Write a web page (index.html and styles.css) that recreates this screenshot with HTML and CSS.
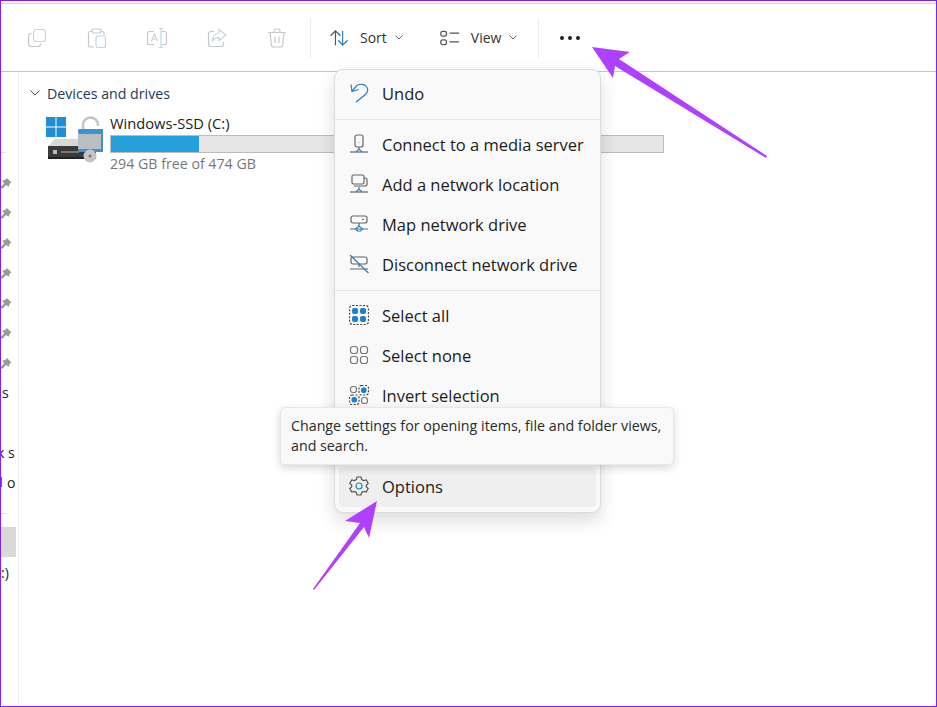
FILE: index.html
```html
<!DOCTYPE html>
<html lang="en">
<head>
<meta charset="utf-8">
<title>File Explorer</title>
<link rel="stylesheet" href="styles.css">
</head>
<body>
<div class="page">
  <div class="topstrip"></div>
  <div class="toolbar">
    <div class="tool">
      <svg class="ico" viewBox="0 0 20 20"><rect x="6.500" y="1.500" width="12" height="12" rx="3" stroke="#bfd6e6"/><path d="M5 5.500H4A2.500 2.500 0 0 0 1.500 8v7.500A3 3 0 0 0 4.500 18.500H11A2.500 2.500 0 0 0 13.500 16v-.5" stroke="#c8c8c8"/></svg>
    </div>
    <div class="tool">
      <svg class="ico" viewBox="0 0 20 20"><path d="M5 3.500H3.500a2 2 0 0 0-2 2V17a2 2 0 0 0 2 2H7M14 3.500h1a2 2 0 0 1 2 2V7" stroke="#c8c8c8"/><rect x="5" y="1" width="9" height="4" rx="1.500" stroke="#c8c8c8"/><rect x="9" y="8" width="9.500" height="11.500" rx="2" stroke="#bfd6e6"/></svg>
    </div>
    <div class="tool">
      <svg class="ico wide" viewBox="0 0 22 20"><path d="M8 3.500H3.500a2 2 0 0 0-2 2v9a2 2 0 0 0 2 2H8M16 3.500h2.500a2 2 0 0 1 2 2v9a2 2 0 0 1-2 2H16" stroke="#c8c8c8"/><path d="M5.500 13 8.500 6l3 7M6.500 11h4" stroke="#c4d4e0"/><path d="M13 .5h4M13 19.500h4M15 .5v19" stroke="#bfd6e6"/></svg>
    </div>
    <div class="tool">
      <svg class="ico" viewBox="0 0 20 20"><path d="M7 3.500H4A2.500 2.500 0 0 0 1.500 6v10A2.500 2.500 0 0 0 4 18.500h10a2.500 2.500 0 0 0 2.500-2.500v-2" stroke="#c8c8c8"/><path d="M12 1.500 19 7l-7 5.500V9.500c-3 0-5 1-6.500 4 0-5 2.500-8 6.500-8.500z" stroke="#bfd6e6"/></svg>
    </div>
    <div class="tool">
      <svg class="ico" viewBox="0 0 20 20"><path d="M1 4.500h18M7 4.500V3a2 2 0 0 1 2-2h2a2 2 0 0 1 2 2v1.500M3 4.500 4.300 16.500a2.500 2.500 0 0 0 2.500 2.500h6.400a2.500 2.500 0 0 0 2.500-2.500L17 4.500M8 8.500v6.500M12 8.500v6.500" stroke="#c8c8c8"/></svg>
    </div>
    <div class="vsep first"></div>
    <div class="tool-text sort">
      <svg class="ico-sm" viewBox="0 0 22 20"><path d="M6.500 18V2M1 7.500 6.500 2 12 7.500" stroke="#555"/><path d="M14.500 2v16M9.500 12.500 14.500 18l5.500-5.500" stroke="#2a7fc1"/></svg>
      <span>Sort</span>
      <svg class="chev" viewBox="0 0 8 5"><path d="M.5.5 4 4 7.500.5"/></svg>
    </div>
    <div class="tool-text view">
      <svg class="ico-sm" viewBox="0 0 22 16"><rect x=".8" y="1" width="6" height="5" rx="2" stroke="#555"/><rect x=".8" y="10" width="6" height="5" rx="2" stroke="#555"/><path d="M10 3h10M10 12h10" stroke="#555"/></svg>
      <span>View</span>
      <svg class="chev" viewBox="0 0 8 5"><path d="M.5.5 4 4 7.500.5"/></svg>
    </div>
    <div class="vsep"></div>
    <div class="dots"><i></i><i></i><i></i></div>
  </div>

  <div class="main">
    <aside class="sidebar">
      <div class="sb-tick"></div>
      <div class="sb-row"><svg class="pin" viewBox="0 0 13 13"><path d="M7.500 .5 12.500 5.500 10.500 6.500 9.500 10 6.500 8 2.500 12.500.5 10.500 4.500 6.500 2.500 3.500 6 2.500z"/></svg></div>
      <div class="sb-row"><svg class="pin" viewBox="0 0 13 13"><path d="M7.500 .5 12.500 5.500 10.500 6.500 9.500 10 6.500 8 2.500 12.500.5 10.500 4.500 6.500 2.500 3.500 6 2.500z"/></svg></div>
      <div class="sb-row"><svg class="pin" viewBox="0 0 13 13"><path d="M7.500 .5 12.500 5.500 10.500 6.500 9.500 10 6.500 8 2.500 12.500.5 10.500 4.500 6.500 2.500 3.500 6 2.500z"/></svg></div>
      <div class="sb-row"><svg class="pin" viewBox="0 0 13 13"><path d="M7.500 .5 12.500 5.500 10.500 6.500 9.500 10 6.500 8 2.500 12.500.5 10.500 4.500 6.500 2.500 3.500 6 2.500z"/></svg></div>
      <div class="sb-row"><svg class="pin" viewBox="0 0 13 13"><path d="M7.500 .5 12.500 5.500 10.500 6.500 9.500 10 6.500 8 2.500 12.500.5 10.500 4.500 6.500 2.500 3.500 6 2.500z"/></svg></div>
      <div class="sb-row"><svg class="pin" viewBox="0 0 13 13"><path d="M7.500 .5 12.500 5.500 10.500 6.500 9.500 10 6.500 8 2.500 12.500.5 10.500 4.500 6.500 2.500 3.500 6 2.500z"/></svg></div>
      <div class="sb-row"><svg class="pin" viewBox="0 0 13 13"><path d="M7.500 .5 12.500 5.500 10.500 6.500 9.500 10 6.500 8 2.500 12.500.5 10.500 4.500 6.500 2.500 3.500 6 2.500z"/></svg></div>
      <div class="sb-row txt-s">s</div>
      <div class="sb-row"></div>
      <div class="sb-row txt-k">k s</div>
      <div class="sb-row txt-o"><b class="sb-mark"></b>o</div>
      <div class="sb-div"></div>
      <div class="sb-row"><div class="sb-sel"></div></div>
      <div class="sb-row txt-c">:)</div>
    </aside>
    <section class="content">
      <div class="group"><svg class="group-chev" viewBox="0 0 10 6"><path d="M.5.5 5 5 9.500.5"/></svg>Devices and drives</div>
      <div class="drive">
        <svg class="drive-ico" viewBox="0 0 58 48">
          <path d="M0 0h9.500v9.500H0zM10.500 0H20v9.500h-9.500zM0 10.500h9.500V20H0zM10.500 10.500H20V20h-9.500z" fill="#1e8ed6"/>
          <path d="M2 29 9 22H34V29z" fill="#d8d8d8"/>
          <rect x="2" y="29" width="48" height="13" fill="#3a3a3a"/>
          <rect x="2" y="40" width="48" height="2" fill="#222"/>
          <rect x="7" y="33" width="4" height="4" fill="#bbb"/>
          <rect x="15" y="34" width="18" height="2" fill="#777"/>
          <path d="M37 14V8a7.500 7.500 0 0 1 15 0v1" fill="none" stroke="#c4c4c4" stroke-width="2.500"/>
          <rect x="32" y="12" width="25" height="23" rx="2" fill="#b9bec2"/>
          <rect x="32" y="12" width="25" height="5" rx="2" fill="#3d93cf"/>
          <rect x="32" y="32" width="25" height="3" fill="#3d93cf"/>
          <rect x="55" y="12" width="2" height="23" fill="#3d93cf"/>
          <circle cx="44" cy="39" r="6.500" fill="#c4c4c4"/>
          <circle cx="44" cy="39" r="1.500" fill="#777"/>
        </svg>
        <div class="drive-info">
          <div class="drive-name">Windows-SSD (C:)</div>
          <div class="bar"><div class="bar-fill"></div></div>
          <div class="drive-free">294 GB free of 474 GB</div>
        </div>
      </div>
    </section>
  </div>

  <div class="menu">
    <div class="item first-item">
      <svg class="m-ico" viewBox="0 0 20 20"><path d="M2 1.500 3 8.500 9.500 6.500" stroke="#2a7fc1"/><path d="M3 8 8 2.500c3-2 7.500-1.500 9.500 1 2 3 1 6-1 8L7 19" stroke="#2a7fc1"/></svg>
      <span>Undo</span>
    </div>
    <div class="msep"></div>
    <div class="item">
      <svg class="m-ico" viewBox="0 0 20 20"><rect x="6" y="1" width="8" height="12" rx="2" stroke="#666"/><path d="M10 8.500v.5" stroke="#666"/><path d="M1 18h18" stroke="#666"/><path d="M10 13v2M7 18l3-3 3 3" stroke="#2a7fc1"/></svg>
      <span>Connect to a media server</span>
    </div>
    <div class="item">
      <svg class="m-ico" viewBox="0 0 20 20"><rect x="3" y="1" width="12" height="9" rx="1.500" stroke="#666"/><path d="M15 4h1.500a1.500 1.500 0 0 1 1.500 1.500V10a2 2 0 0 1-2 2H5" stroke="#666"/><path d="M1 18h18" stroke="#666"/><path d="M10 13v2M7 18l3-3 3 3" stroke="#2a7fc1"/></svg>
      <span>Add a network location</span>
    </div>
    <div class="item">
      <svg class="m-ico" viewBox="0 0 20 20"><rect x="2" y="2" width="16" height="7" rx="2" stroke="#666"/><path d="M13 5.500h2M1 15h18M10 9v3" stroke="#666"/><path d="M6.500 15 10 12l3.500 3 -2 2h-3z" stroke="#2a7fc1"/></svg>
      <span>Map network drive</span>
    </div>
    <div class="item">
      <svg class="m-ico" viewBox="0 0 20 20"><rect x="2" y="3" width="16" height="7" rx="2" stroke="#666"/><path d="M1 15h18M10 10v3" stroke="#666"/><path d="M1 1 19.500 19" stroke="#2a7fc1"/></svg>
      <span>Disconnect network drive</span>
    </div>
    <div class="msep"></div>
    <div class="item">
      <svg class="m-ico" viewBox="0 0 20 20"><rect x=".5" y=".5" width="19" height="19" rx="3" stroke="#444" stroke-dasharray="2 1.500"/><rect x="3" y="3" width="6" height="6" rx="2" class="fill-b"/><rect x="11" y="3" width="6" height="6" rx="2" class="fill-b"/><rect x="3" y="11" width="6" height="6" rx="2" class="fill-b"/><rect x="11" y="11" width="6" height="6" rx="2" class="fill-b"/></svg>
      <span>Select all</span>
    </div>
    <div class="item">
      <svg class="m-ico" viewBox="0 0 20 20"><rect x="1.500" y="1.500" width="7" height="7" rx="2.500" stroke="#777"/><rect x="11.500" y="1.500" width="7" height="7" rx="2.500" stroke="#777"/><rect x="1.500" y="11.500" width="7" height="7" rx="2.500" stroke="#777"/><rect x="11.500" y="11.500" width="7" height="7" rx="2.500" stroke="#777"/></svg>
      <span>Select none</span>
    </div>
    <div class="item">
      <svg class="m-ico" viewBox="0 0 20 20"><rect x="1.500" y="1.500" width="6" height="6" rx="2.500" stroke="#777"/><rect x="10" y=".5" width="9.500" height="9.500" rx="2.500" stroke="#444" stroke-dasharray="2 1.500"/><rect x="12" y="2.500" width="5.500" height="5.500" rx="2" class="fill-b"/><rect x=".5" y="10" width="9.500" height="9.500" rx="2.500" stroke="#444" stroke-dasharray="2 1.500"/><rect x="2.500" y="12" width="5.500" height="5.500" rx="2" class="fill-b"/><rect x="12.500" y="12.500" width="6" height="6" rx="2.500" stroke="#777"/></svg>
      <span>Invert selection</span>
    </div>
    <div class="msep"></div>
    <div class="item"></div>
    <div class="item hover">
      <svg class="m-ico" viewBox="0 0 20 20"><path d="M8 1h4l.7 2.600 1.900 1L17.200 4l2 3.400-1.900 1.900v1.400l1.900 1.900-2 3.400-2.600-.6-1.900 1L12 19H8l-.7-2.600-1.900-1-2.600.6-2-3.400 1.900-1.900V9.300L.8 7.400l2-3.400 2.600.6 1.900-1z" stroke="#555"/><circle cx="10" cy="10" r="3" stroke="#2a7fc1"/></svg>
      <span>Options</span>
    </div>
  </div>

  <div class="tooltip">Change settings for opening items, file and folder views, and search.</div>

  <svg class="arrows" viewBox="0 0 937 707">
    <path d="M592 47 630 52 619 59 767 156 766 158 615 66 613 78z"/>
    <path d="M377 501 369 538 364 527 314 590 313 589 360 523 345 521z"/>
  </svg>
</div>
</body>
</html>
```
FILE: styles.css
```css
* { box-sizing: border-box; }
html, body { margin: 0; padding: 0; background: #fff; }
body { font-family: "Open Sans", "Noto Sans", "Liberation Sans", sans-serif; color: #1c1c1c; }

.page { position: relative; width: 937px; height: 707px; overflow: hidden; background: #fff; display: flex; flex-direction: column; }
.page::after { content: ""; position: absolute; inset: 0; border: 1px solid #7f1fff; pointer-events: none; }

.topstrip { height: 4px; flex: none; border-bottom: 1px solid #d0d0d0; }

.toolbar { height: 68px; flex: none; border-bottom: 1px solid #c6c6c6; display: flex; align-items: center; padding-left: 7px; }
.tool { width: 60px; display: flex; justify-content: center; }
.ico { width: 20px; height: 20px; fill: none; stroke-width: 1.200; }
.ico.wide { width: 22px; }
.vsep { width: 1px; height: 40px; background: #ececec; margin-top: 1px; }
.vsep.first { margin-left: 3px; }
.tool-text { display: flex; align-items: center; font-size: 14px; color: #333; }
.sort { margin-left: 18px; }
.sort span { margin-left: 10px; }
.view { margin-left: 37px; }
.view span { margin-left: 10px; }
.ico-sm { width: 21px; height: 18px; fill: none; stroke-width: 1.300; flex: none; }
.chev { width: 8px; height: 5px; margin-left: 8px; fill: none; stroke: #666; stroke-width: 1; }
.dots { display: flex; gap: 4px; margin-left: 21px; }
.dots i { width: 4px; height: 4px; border-radius: 50%; background: #1f1f1f; }
.view + .vsep { margin-left: 21px; }

.main { flex: 1; display: flex; min-height: 0; }

.sidebar { width: 19px; flex: none; border-right: 1px solid #efefef; padding-top: 80px; overflow: hidden; }
.sb-tick { width: 6px; height: 1px; background: #e2e2e2; margin-bottom: 15px; }
.sb-row { height: 30px; display: flex; align-items: center; justify-content: flex-end; font-size: 14px; color: #222; white-space: nowrap; position: relative; top: -1px; }
.pin { width: 12px; height: 13px; margin: 2px 6px 0 0; fill: #9a9a9a; }
.txt-s { justify-content: flex-start; padding-left: 2px; }
.txt-k { justify-content: flex-start; margin-left: -3px; }
.txt-o { justify-content: flex-start; padding-left: 7px; }
.sb-mark { position: absolute; left: 1px; top: 10px; width: 1px; height: 10px; background: #2a6fe0; }
.sb-div { height: 1px; width: 6px; background: #dedede; margin: 15px 0 14px; }
.sb-sel { position: absolute; left: 0; top: 0; width: 16px; height: 30px; background: #d9d9d9; }
.txt-c { justify-content: flex-start; padding-left: 1px; }

.content { flex: 1; padding: 11px 0 0 11px; }
.group { display: flex; align-items: center; font-size: 14.200px; color: #1f3a5a; height: 20px; }
.group-chev { width: 10px; height: 6px; margin-right: 7px; fill: none; stroke: #555; stroke-width: 1; }
.drive { display: flex; margin: 10px 0 0 16px; }
.drive-ico { width: 58px; height: 48px; flex: none; margin-top: 4px; overflow: visible; }
.drive-info { margin-left: 6px; width: 554px; }
.drive-name { font-size: 14.700px; line-height: 20px; color: #1c1c1c; }
.bar { height: 18px; margin-top: 2px; border: 1px solid #bdbdbd; background: #e6e6e6; }
.bar-fill { height: 100%; width: 16%; background: #26a0da; }
.drive-free { font-size: 14.200px; line-height: 20px; color: #777; margin-top: 1px; }

.menu { position: absolute; left: 334px; top: 69px; width: 267px; height: 444px; background: #f9f9f9; border: 1px solid #dcdcdc; border-radius: 9px; box-shadow: 0 8px 18px rgba(0,0,0,.14); padding: 4px; display: flex; flex-direction: column; }
.item { height: 40px; flex: none; display: flex; align-items: center; padding: 0 0 2px 10px; font-size: 16.500px; color: #1c1c1c; border-radius: 4px; }
.item span { margin-left: 13px; white-space: nowrap; }
.msep { height: 1px; flex: none; background: #e6e6e6; margin: 5px -4px; }
.item.hover { background: #efefef; }
.m-ico { width: 20px; height: 20px; flex: none; fill: none; stroke-width: 1.200; }
.fill-b { fill: #1e7fd0; }

.tooltip { position: absolute; left: 280px; top: 407px; width: 394px; height: 58px; background: #f9f9f9; border: 1px solid #e8e8e8; border-radius: 5px; box-shadow: 0 3px 8px rgba(0,0,0,.16); padding: 8px 10px; font-size: 14.250px; line-height: 20px; color: #2a2a2a; }

.arrows { position: absolute; left: 0; top: 0; width: 937px; height: 707px; fill: #b040ff; pointer-events: none; }
```
